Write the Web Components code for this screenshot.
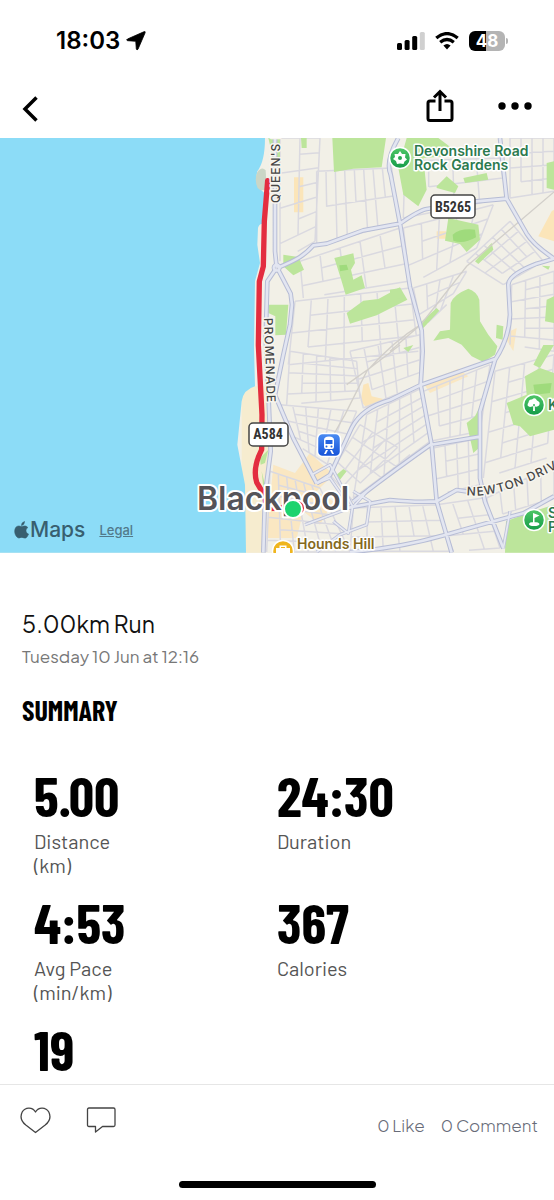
<!DOCTYPE html>
<html lang="en">
<head>
<meta charset="utf-8">
<meta name="viewport" content="width=device-width, initial-scale=1">
<title>5.00km Run</title>
<style>
  body { margin: 0; background: #fff; font-family: Inter, "Liberation Sans", sans-serif; }
</style>
</head>
<body>
<activity-screen>
  <status-bar slot="top" time="18:03" battery="48"></status-bar>
  <nav-bar slot="top"></nav-bar>
  <route-map></route-map>
  <activity-title heading="5.00km Run">Tuesday 10 Jun at 12:16</activity-title>
  <stat-summary heading="Summary">
    <stat-item value="5.00">Distance<br>(km)</stat-item>
    <stat-item value="24:30">Duration</stat-item>
    <stat-item value="4:53">Avg Pace<br>(min/km)</stat-item>
    <stat-item value="367">Calories</stat-item>
    <stat-item value="19"></stat-item>
  </stat-summary>
  <social-bar slot="bottom" likes="0" comments="0"></social-bar>
</activity-screen>

<script>
class ActivityScreen extends HTMLElement {
  constructor() {
    super();
    this.attachShadow({mode: "open"}).innerHTML = `
      <style>
        :host { display: flex; flex-direction: column; height: 100vh; overflow: hidden; }
        main { flex: 1; min-height: 0; overflow: hidden; }
      </style>
      <slot name="top"></slot>
      <main><slot></slot></main>
      <slot name="bottom"></slot>`;
  }
}
customElements.define("activity-screen", ActivityScreen);

class StatusBar extends HTMLElement {
  connectedCallback() {
    this.attachShadow({mode: "open"}).innerHTML = `
      <style>
        :host { display: flex; align-items: center; justify-content: space-between; height: 82px; padding: 0 46px 0 56px; box-sizing: border-box; }
        .time, .signals { display: flex; align-items: center; }
        .time { gap: 6px; font-size: 24px; font-weight: 600; line-height: 28px; }
        .signals { gap: 10px; }
        .battery { display: flex; align-items: center; gap: 1px; }
        .level {
          width: 36px; height: 20px; border-radius: 6px; color: #fff;
          background: linear-gradient(90deg, #000 48%, #b4b4b4 48%);
          font-size: 17px; font-weight: 700; line-height: 20px; text-align: center;
        }
        .cap { width: 2px; height: 6px; border-radius: 0 2px 2px 0; background: #b4b4b4; }
      </style>
      <div class="time">
        <span>${this.getAttribute("time")}</span>
        <svg width="20" height="20" viewBox="0 0 20 20"><path d="M17.800.8Q19.800 0 19 2L12 18.200Q11 19.700 10.300 18L9.800 10.800Q9.700 10.200 9 10.200L1.600 9.700Q-.2 9 1.500 8Z" stroke="#000" stroke-width=".8"/></svg>
      </div>
      <div class="signals">
        <svg width="28" height="18" viewBox="0 0 28 18">
          <rect y="11" width="5" height="7" rx="1.500"/><rect x="7.600" y="8" width="5" height="10" rx="1.500"/>
          <rect x="15.200" y="4" width="5" height="14" rx="1.500"/><rect x="22.800" width="5" height="18" rx="1.500" fill="#d0d0d0"/>
        </svg>
        <svg width="24" height="18" viewBox="0 0 24 18" fill="none" stroke="#000" stroke-width="3.300">
          <path d="M1.300 6.100Q12-2.900 22.700 6.100M5.200 10.300Q12 4.700 18.800 10.300"/>
          <path d="M8.400 13.600Q12 10.600 15.600 13.600L12 17.500Z" fill="#000" stroke="none"/>
        </svg>
        <div class="battery"><div class="level">${this.getAttribute("battery")}</div><div class="cap"></div></div>
      </div>`;
  }
}
customElements.define("status-bar", StatusBar);

class NavBar extends HTMLElement {
  constructor() {
    super();
    this.attachShadow({mode: "open"}).innerHTML = `
      <style>
        :host { display: flex; align-items: center; justify-content: space-between; height: 56px; padding: 0 21px 2px; box-sizing: border-box; }
        button { display: flex; padding: 0; border: 0; background: none; cursor: pointer; }
        .actions { display: flex; align-items: center; gap: 43px; padding-bottom: 6px; }
        svg { fill: none; stroke: #000; stroke-width: 3; }
      </style>
      <button aria-label="Back"><svg width="20" height="26" viewBox="0 0 20 26"><path d="M15.500 1.500 4 13l11.500 11.500" stroke-width="3.500"/></svg></button>
      <div class="actions">
        <button aria-label="Share"><svg width="28" height="34" viewBox="0 0 28 34"><path d="M9.500 12H4Q2 12 2 14V29.500Q2 31.500 4 31.500H24Q26 31.500 26 29.500V14Q26 12 24 12H18.500M14 22V3M8 8.500 14 2.500 20 8.500"/></svg></button>
        <button aria-label="More"><svg width="36" height="8" viewBox="0 0 36 8"><g fill="#000" stroke="none"><circle cx="5" cy="4" r="3.700"/><circle cx="18" cy="4" r="3.700"/><circle cx="31" cy="4" r="3.700"/></g></svg></button>
      </div>`;
  }
}
customElements.define("nav-bar", NavBar);

/* street blocks: four corners (clockwise from top left), columns, rows */
const DISTRICTS = [
  [[840, 0], [960, 0], [945, 310], [840, 370], 2, 7],
  [[950, 100], [1175, 90], [1195, 255], [950, 320], 8, 2],
  [[900, 370], [1200, 270], [1225, 430], [910, 480], 5, 3],
  [[885, 490], [1230, 450], [1255, 640], [865, 680], 7, 4],
  [[1210, 270], [1480, 200], [1430, 330], [1230, 440], 5, 3],
  [[1215, 70], [1500, 60], [1515, 180], [1210, 240], 4, 2],
  [[1530, 0], [1662, 0], [1662, 160], [1530, 180], 4, 4],
  [[1400, 370], [1530, 250], [1630, 370], [1510, 440], 5, 4],
  [[1535, 440], [1662, 400], [1662, 640], [1530, 620], 3, 7],
  [[1240, 450], [1400, 400], [1340, 500], [1265, 570], 4, 3],
  [[1050, 640], [1260, 590], [1260, 740], [1090, 810], 5, 4],
  [[870, 640], [1070, 670], [1080, 780], [860, 800], 5, 5],
  [[840, 800], [1070, 820], [1000, 990], [890, 920], 6, 5],
  [[1100, 830], [1265, 750], [1290, 910], [1060, 1080], 5, 6],
  [[1270, 760], [1470, 680], [1440, 880], [1290, 910], 5, 4],
  [[1300, 930], [1440, 900], [1440, 1040], [1310, 1070], 4, 3],
  [[1485, 700], [1662, 650], [1640, 960], [1450, 1020], 4, 7],
  [[1060, 1110], [1310, 1100], [1350, 1240], [1050, 1240], 6, 3],
  [[1310, 1100], [1450, 1080], [1500, 1230], [1360, 1240], 3, 3],
  [[1460, 1080], [1662, 980], [1662, 1080], [1470, 1140], 5, 1],
  [[810, 1000], [960, 1050], [1050, 1242], [800, 1242], 6, 7],
  [[990, 1010], [1080, 860], [1230, 950], [1060, 1090], 4, 4]
];

const MAIN_ROADS = [
  "M825 0V340L830 389",
  "M828 392 802 430 797 600 805 760 812 940 795 1071 790 1244",
  "M834 394 872 467 876 500 870 560 850 650 825 771 880 901 950 1036",
  "M834 389Q880 370 900 357T940 322L980 317 1090 277 1200 257",
  "M1200 257Q1255 218 1280 213L1430 190 1520 182 1500 0",
  "M1520 182 1580 287Q1600 320 1662 362",
  "M1195 0Q1155 70 1172 110L1200 257 1230 447 1265 577 1268 640 1262 741 1295 921 1310 1090 1355 1244",
  "M1662 362 1610 377Q1525 410 1525 440L1530 530Q1528 600 1485 666L1440 821V1021L1455 1091 1510 1231",
  "M950 1036 990 1011 1055 870Q1085 810 1170 786L1262 741 1485 663",
  "M1040 1110 1170 1086Q1250 1094 1310 1090L1370 1056 1420 1063",
  "M1060 1091Q1150 1020 1290 921L1440 896",
  "M1050 1242Q1200 1230 1335 1191T1570 1126L1662 1075"
];

const SIDE_ROADS = [
  "M938 1009 990 980 1058 1105 1045 1186 1000 1150",
  "M915 1160 1060 1106 1110 1050M950 1242 1020 1190 1100 1160 1110 1090 1060 1060",
  "M1530 1120 1510 1231M950 1036 990 1020 1030 1078"
];

class RouteMap extends HTMLElement {
  constructor() {
    super();
    this.attachShadow({mode: "open"});
  }

  connectedCallback() {
    this.render();
  }

  streets() {
    const mix = (a, b, t) => [a[0] + (b[0] - a[0]) * t, a[1] + (b[1] - a[1]) * t].map(Math.round);
    let d = "";
    for (const [tl, tr, br, bl, cols, rows] of DISTRICTS) {
      for (let i = 0; i <= cols; i++) {
        // every third street stops short of the far side
        const end = i % 3 === 1 ? (rows - 1) / rows : 1;
        const a = mix(tl, tr, i / cols), b = mix(bl, br, i / cols);
        d += `M${a}L${mix(a, b, end || 1)}`;
      }
      for (let j = 0; j <= rows; j++) {
        const start = j % 2 ? 1 / cols : 0;
        const a = mix(tl, bl, j / rows), b = mix(tr, br, j / rows);
        d += `M${mix(a, b, start)}L${b}`;
      }
    }
    return d;
  }

  render() {
    const main = MAIN_ROADS.join("");
    const side = SIDE_ROADS.join("");
    this.shadowRoot.innerHTML = `
      <style>
        :host { display: block; position: relative; }
        .map { display: block; width: 100%; height: auto; }
        text { font-family: Inter, "Liberation Sans", sans-serif; paint-order: stroke; stroke-linejoin: round; }
        .street { font-size: 12px; font-weight: 500; fill: #444; stroke: #f7f5ee; stroke-width: 3px; letter-spacing: 1px; }
        .place { font-size: 14px; font-weight: 600; fill: #2c7a4e; stroke: #fff; stroke-width: 3px; }
        .shop { fill: #85681c; }
        .city { font-size: 32px; font-weight: 600; fill: #555459; stroke: #fff; stroke-width: 4px; }
        .sign rect { fill: #fff; stroke: #444; stroke-width: 1.500px; }
        .sign text { font: 700 14px "Liberation Sans Narrow", "Roboto Condensed", Roboto, sans-serif; fill: #333; text-anchor: middle; }
        .credit { position: absolute; left: 14px; bottom: 11px; display: flex; align-items: center; color: #385f70; }
        .brand { display: flex; align-items: center; gap: 1px; margin-right: 14px; font-size: 21px; line-height: 24px; font-weight: 500; }
        .credit a { color: #52798a; font-size: 13px; line-height: 16px; font-weight: 500; }
      </style>
      <svg class="map" viewBox="0 0 554 414.500" role="img" aria-label="Route map">
        <defs>
          <linearGradient id="green" x2="0" y2="1"><stop stop-color="#4fc767"/><stop offset="1" stop-color="#149b48"/></linearGradient>
          <linearGradient id="blue" x2="0" y2="1"><stop stop-color="#4c8df3"/><stop offset="1" stop-color="#1552d8"/></linearGradient>
        </defs>
        <rect width="554" height="415" fill="#f2f0e7"/>
        <g transform="scale(.33333)">
          <path fill="#f6eccf" d="M725 745H805L812 960 795 1244H725Z"/>
          <g fill="#fbe5b9">
            <path d="M882 118h28v105h-28ZM1655 220 1662 215V310L1615 295ZM1310 280h28v22h-28ZM1090 740 1105 735 1115 775 1150 783 1105 815 1082 790Z"/>
            <path d="M1270 735 1375 692 1405 715 1290 765ZM820 980 885 1005 930 945 1000 1010 950 1060 1000 1090 960 1160 910 1120 890 1200 800 1200ZM1510 590 1550 570 1540 640Z" opacity=".8"/>
          </g>
          <path d="${this.streets()}" fill="none" stroke="#dad9e0" stroke-width="4.500"/>
          <g fill="#bce59b">
            <path d="M997 0 1158 0 1145 88 1060 92 1002 102ZM805 0H840V95L820 90 812 30ZM903 0H920V30H905Z"/>
            <path d="M850 350 895 357 912 395 880 412 850 385ZM1003 360 1060 346 1065 375 1053 395 1060 425 1085 412 1095 450 1037 470 1022 420Z"/>
            <path d="M1040 525 1090 488 1135 483 1200 448 1222 485 1130 532 1050 557ZM805 500 865 500 858 590 826 592 826 535 805 525Z"/>
            <path d="M1220 0H1315L1355 30 1340 55 1270 60 1280 155 1255 205 1210 170 1195 90ZM1310 145 1340 115 1375 145 1365 165 1310 150ZM1390 120 1460 105 1465 125 1395 135Z"/>
            <path d="M1345 240 1435 260 1440 305 1400 342 1380 318 1335 308ZM1425 370 1475 315 1480 335 1435 378ZM1640 75 1662 70V155L1640 150Z"/>
            <path d="M1170 455 1200 450V480L1170 490ZM1352 495Q1360 470 1405 452 1430 460 1438 485L1440 550 1465 590 1492 625 1485 650 1450 672 1415 655 1385 620 1345 600 1300 608 1320 580 1350 575ZM1260 555 1310 510 1318 518 1270 570Z"/>
            <path d="M1490 560 1510 565 1508 605 1488 600ZM1640 485 1662 475V555L1635 550ZM1210 630 1240 621 1225 642ZM1630 621 1662 621 1620 690 1600 680Z"/>
            <path d="M1400 855 1425 835 1440 805 1437 930 1420 945ZM1520 795 1580 770 1575 715 1620 690 1662 705V875L1590 895 1560 865 1540 860ZM1518 1150 1600 1120 1662 1100V1244H1515Z"/>
            <path d="M780 960 805 935 795 975 782 980ZM1010 1010 1030 993 1040 1000 1020 1025ZM785 1000 795 1040 790 1050ZM1625 383 1650 385 1645 395Z"/>
          </g>
          <g fill="#9fdb7c"><path d="M1358 290Q1380 270 1425 275L1428 298Q1390 320 1360 308ZM1600 740 1655 735 1650 765 1605 770ZM1018 382 1040 380 1045 395 1020 400Z"/></g>
          <path d="M1662 162 1400 385 1262 560Q1180 610 1100 700L1035 830 995 900M1200 621 1110 690 1040 740M1262 560 1170 640" fill="none" stroke="#d2cfca" stroke-width="4"/>
          <g fill="none" stroke-linejoin="round">
            <path d="${side}" stroke="#bcc1d8" stroke-width="10"/>
            <path d="${main}" stroke="#b6bcd5" stroke-width="14"/>
            <circle cx="830" cy="389" r="9" stroke="#b6bcd5" stroke-width="12"/>
            <path d="${side}" stroke="#e7e9f2" stroke-width="5"/>
            <path d="${main}" stroke="#e3e6f1" stroke-width="8"/>
            <circle cx="830" cy="389" r="9" stroke="#e3e6f1" stroke-width="7"/>
          </g>
          <path fill="#8cdcf7" d="M0 0H795Q795 70 772 100 762 140 793 165L787 258Q778 256 774 270L772 320 780 375 765 430 762 627 765 745Q730 755 725 790L712 920 735 1040 738 1244H0Z"/>
          <path fill="#cad6c6" d="M772 103Q785 84 797 97L800 153Q783 162 773 150 762 125 772 103Z"/>
          <path d="M803 128 793 250 790 385 778 430 775 621 786 830 785 935Q757 990 770 1033L795 1075 800 1112 840 1110 900 1101" fill="none" stroke="#e32d3f" stroke-width="16" stroke-linejoin="round" stroke-linecap="round"/>
        </g>

        <text class="street" x="0" y="0" transform="translate(280 65) rotate(-90)">QUEEN'S DR</text>
        <text class="street" x="0" y="0" transform="translate(264 180) rotate(88)">PROMENADE</text>
        <path id="newton" d="M467 357Q480 359 500 354T554 332 650 300" fill="none"/>
        <text class="street"><textPath href="#newton">NEWTON DRIVE</textPath></text>

        <g class="sign"><rect x="431" y="57" width="44" height="23" rx="4"/><text x="453" y="74">B5265</text></g>
        <g class="sign"><rect x="249" y="285" width="39" height="23" rx="4"/><text x="268" y="301">A584</text></g>

        <text class="place" x="414" y="18">Devonshire Road</text>
        <text class="place" x="414" y="32">Rock Gardens</text>
        <text class="place" x="548" y="272">K</text>
        <text class="place" x="548" y="380">S</text>
        <text class="place" x="548" y="394">P</text>
        <text class="place shop" x="297" y="411">Hounds Hill</text>

        <g stroke="#fff" stroke-width="1.500" fill="url(#green)">
          <circle cx="400" cy="20" r="10.500"/><circle cx="534" cy="267" r="10.500"/><circle cx="534" cy="382" r="10.500"/>
          <circle cx="283" cy="413" r="10.500" fill="#efb51f"/>
          <rect x="317.500" y="295.500" width="23" height="23" rx="5" fill="url(#blue)"/>
        </g>
        <g fill="#fff">
          <path d="M400 13 402 16H405.500L405 19.500 407 21.500 404.500 23.500 403.500 26 400 25.500 397 26 396 23 393 21 395 19 394.500 16H398Z"/>
          <path d="M533.300 266 533 273H535L534.700 266ZM530 269Q526 268 528.500 264.500 529 261 532 261.500 535 258.500 537 262.500 541 264 539 267.500 537 269.500 534 268Z"/>
          <path d="M533 375 539.500 377.500 534.500 380V385H533ZM529 386Q529 384 534 384T539.500 386Q539 388 534 388T529 386Z"/>
          <path d="M324 302Q324 298.500 329 298.500T334 302V309Q334 311 332 311H326Q324 311 324 309ZM326 312H328L326 316H324ZM332 312H330L332 316H334Z"/>
          <path d="M276 410H279.500V407.500H286.500V410H290V415H276Z"/>
        </g>
        <circle cx="400" cy="20" r="2" fill="#28a852"/>
        <path d="M325.500 302H332.500V306H325.500Z" fill="#2565e1"/><circle cx="326.500" cy="308.500" r="1" fill="#2565e1"/><circle cx="331.500" cy="308.500" r="1" fill="#2565e1"/>
        <path d="M281 409.500H285" fill="none" stroke="#efb51f"/>

        <text class="city" x="197" y="372">Blackpool</text>
        <circle cx="297" cy="370" r="8" fill="#e32d3f" stroke="#fff" stroke-width="2"/>
        <circle cx="293" cy="371" r="9" fill="#1dd36e" stroke="#fff" stroke-width="2"/>
      </svg>
      <div class="credit">
        <span class="brand">
          <svg width="15" height="18" viewBox="0 0 15 18" fill="currentColor"><path d="M10.500.5Q10.500 4 7.500 4.500 7.300 1.500 10.500.5ZM7.500 5.500C9 5.500 11.500 3.800 13.800 6.500 11 8.300 11.600 12 14.500 13 13 17 11.500 17.500 10 16.900 8.200 16.200 7 16.200 5.400 16.900 3.500 17.500 1.500 14.500 1 12.500 0 8 2 4.800 5 5 6 5.100 6.800 5.500 7.500 5.500Z" stroke="currentColor" stroke-width=".6"/></svg>
          Maps
        </span>
        <a href="#legal">Legal</a>
      </div>`;
  }
}
customElements.define("route-map", RouteMap);

class ActivityTitle extends HTMLElement {
  connectedCallback() {
    this.attachShadow({mode: "open"}).innerHTML = `
      <style>
        :host { display: block; padding: 55px 22px 0; font-family: "Plus Jakarta Sans", Inter, sans-serif; }
        h1 { margin: 0; font-size: 23px; line-height: 32px; font-weight: 400; color: #111; }
        p { margin: 0; font-size: 17px; line-height: 32px; color: #777; font-weight: 400; }
      </style>
      <h1>${this.getAttribute("heading")}</h1>
      <p><slot></slot></p>`;
  }
}
customElements.define("activity-title", ActivityTitle);

class StatSummary extends HTMLElement {
  connectedCallback() {
    this.attachShadow({mode: "open"}).innerHTML = `
      <style>
        :host { display: block; padding: 22px 22px 0; }
        h2 {
          margin: 0 0 39px; font-size: 28px; line-height: 32px; font-weight: 700; text-transform: uppercase;
          font-family: "Barlow Condensed", "Liberation Sans Narrow", "Roboto Condensed", sans-serif;
        }
        .grid { display: grid; grid-template-columns: 1fr 1fr; row-gap: 15px; padding: 0 12px; }
      </style>
      <h2>${this.getAttribute("heading")}</h2>
      <div class="grid"><slot></slot></div>`;
  }
}
customElements.define("stat-summary", StatSummary);

class StatItem extends HTMLElement {
  connectedCallback() {
    this.attachShadow({mode: "open"}).innerHTML = `
      <style>
        :host { display: block; }
        .value {
          font-size: 56px; line-height: 60px; font-weight: 700; margin-bottom: 4px;
          font-family: "Barlow Condensed", "Liberation Sans Narrow", "Roboto Condensed", sans-serif;
        }
        .label { font-size: 20px; line-height: 24px; font-weight: 400; color: #555; font-family: Barlow, Roboto, sans-serif; }
      </style>
      <div class="value">${this.getAttribute("value")}</div>
      <div class="label"><slot></slot></div>`;
  }
}
customElements.define("stat-item", StatItem);

class SocialBar extends HTMLElement {
  connectedCallback() {
    this.attachShadow({mode: "open"}).innerHTML = `
      <style>
        :host { display: block; border-top: 1px solid #e6e6e6; background: #fff; }
        .row { display: flex; align-items: center; height: 80px; padding: 0 16px 0 20px; }
        button { display: flex; padding: 0 0 10px; border: 0; background: none; cursor: pointer; }
        button svg { fill: none; stroke: #444; stroke-width: 1.300; stroke-linejoin: round; }
        .comment { margin: 0 auto 0 35px; }
        .counts { display: flex; gap: 16px; font-family: "Plus Jakarta Sans", Inter, sans-serif; font-size: 17px; line-height: 24px; font-weight: 300; color: #676b78; }
        .home { width: 197px; height: 7px; border-radius: 4px; background: #000; margin: 16px auto 12px; }
      </style>
      <div class="row">
        <button aria-label="Like"><svg width="31" height="28" viewBox="0 0 31 28"><path d="M15.500 26.500 5.800 19C1.500 15.500 0 10.500 2.200 6 5 1 12.500.5 15.500 6 18.500.5 26 1 28.800 6 31 10.500 29.500 15.500 25.200 19Z"/></svg></button>
        <button class="comment" aria-label="Comment"><svg width="31" height="28" viewBox="0 0 31 28"><path d="M3 2H27.500Q29 2 29 3.500V19Q29 20.500 27.500 20.500H16.500L9.500 26V20.500H3Q1.500 20.500 1.500 19V3.500Q1.500 2 3 2Z"/></svg></button>
        <div class="counts"><span>${this.getAttribute("likes")} Like</span><span>${this.getAttribute("comments")} Comment</span></div>
      </div>
      <div class="home"></div>`;
  }
}
customElements.define("social-bar", SocialBar);
</script>
</body>
</html>
